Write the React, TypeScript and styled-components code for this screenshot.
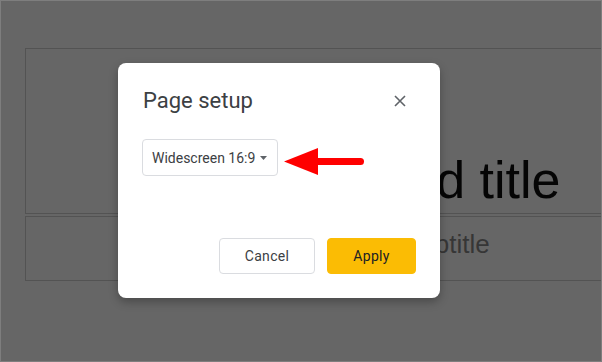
import styled, { createGlobalStyle } from 'styled-components';

const GlobalStyle = createGlobalStyle`
    html, body {
        margin: 0;
        padding: 0;
        background: #666666;
    }
    * {
        box-sizing: border-box;
    }
`;

const Screen = styled.div`
    position: relative;
    width: 602px;
    height: 362px;
    overflow: hidden;
    background: #666666;
    border: 1px solid #7e7e7e;
    padding: 47px 0 0 24px;
    display: flex;
    flex-direction: column;
    gap: 2px;
`;

const Placeholder = styled.div<{ $height: number }>`
    flex: none;
    width: 704px;
    height: ${(p) => p.$height}px;
    border: 1px solid #535353;
    display: flex;
    justify-content: center;
    font-family: 'Liberation Sans', Arial, sans-serif;
`;

const TitleBox = styled(Placeholder)`
    align-items: flex-end;
    padding-bottom: 3px;
`;

const SubtitleBox = styled(Placeholder)`
    align-items: flex-start;
    padding-top: 12px;
`;

const SlideTitle = styled.div`
    font-size: 52px;
    line-height: 60px;
    color: #050505;
`;

const SlideSubtitle = styled.div`
    font-size: 26px;
    line-height: 30px;
    color: #363636;
`;

const Dialog = styled.div`
    position: absolute;
    left: 117px;
    top: 62px;
    width: 322px;
    height: 235px;
    background: #fff;
    border-radius: 8px;
    box-shadow: 0 4px 10px rgba(0, 0, 0, 0.28);
    padding: 22px 24px 24px 25px;
    display: flex;
    flex-direction: column;
    font-family: Roboto, 'Noto Sans', sans-serif;
`;

const Header = styled.div`
    display: flex;
    align-items: center;
    justify-content: space-between;
`;

const DialogTitle = styled.div`
    font-size: 22px;
    line-height: 28px;
    color: #3c4043;
`;

const CloseButton = styled.button`
    width: 32px;
    height: 32px;
    border: none;
    background: none;
    padding: 0;
    display: flex;
    align-items: center;
    justify-content: center;
    cursor: pointer;
`;

const Select = styled.div`
    margin-top: 22px;
    margin-left: -1px;
    width: 136px;
    height: 37px;
    border: 1px solid #dadce0;
    border-radius: 4px;
    display: flex;
    align-items: center;
    justify-content: space-between;
    padding: 0 10px 0 9px;
    font-size: 14px;
    color: #3c4043;
`;

const Footer = styled.div`
    margin-top: auto;
    display: flex;
    justify-content: flex-end;
    gap: 12px;
`;

const Button = styled.button<{ $primary?: boolean }>`
    height: 36px;
    padding: 0;
    border-radius: 4px;
    font-family: Roboto, 'Noto Sans', sans-serif;
    font-size: 14px;
    font-weight: 400;
    letter-spacing: 0.3px;
    border: 1px solid ${(p) => (p.$primary ? '#fbbc04' : '#dadce0')};
    background: ${(p) => (p.$primary ? '#fbbc04' : '#fff')};
    color: ${(p) => (p.$primary ? '#202124' : '#3c4043')};
    width: ${(p) => (p.$primary ? 89 : 96)}px;
`;

const Annotation = styled.svg`
    position: absolute;
    left: 282px;
    top: 146px;
`;

export default function App() {
    return (
        <>
            <GlobalStyle />
            <Screen>
                <TitleBox $height={166}>
                    <SlideTitle>Click to add title</SlideTitle>
                </TitleBox>
                <SubtitleBox $height={65}>
                    <SlideSubtitle>Click to add subtitle</SlideSubtitle>
                </SubtitleBox>

                <Dialog>
                    <Header>
                        <DialogTitle>Page setup</DialogTitle>
                        <CloseButton aria-label="Close">
                            <svg width="12" height="12" viewBox="0 0 12 12">
                                <path d="M1 1L11 11M11 1L1 11" stroke="#5f6368" strokeWidth="1.6" />
                            </svg>
                        </CloseButton>
                    </Header>

                    <Select>
                        <span>Widescreen 16:9</span>
                        <svg width="7" height="4" viewBox="0 0 7 4">
                            <path d="M0 0h7L3.5 4z" fill="#5f6368" />
                        </svg>
                    </Select>

                    <Footer>
                        <Button>Cancel</Button>
                        <Button $primary>Apply</Button>
                    </Footer>
                </Dialog>

                {/* red pointer drawn over the screenshot */}
                <Annotation width="84" height="30" viewBox="0 0 84 30">
                    <path d="M1 14.5L35 1V28Z" fill="#ff0000" />
                    <line x1="33" y1="14.5" x2="77.5" y2="14.5" stroke="#ff0000" strokeWidth="7" strokeLinecap="round" />
                </Annotation>
            </Screen>
        </>
    );
}
